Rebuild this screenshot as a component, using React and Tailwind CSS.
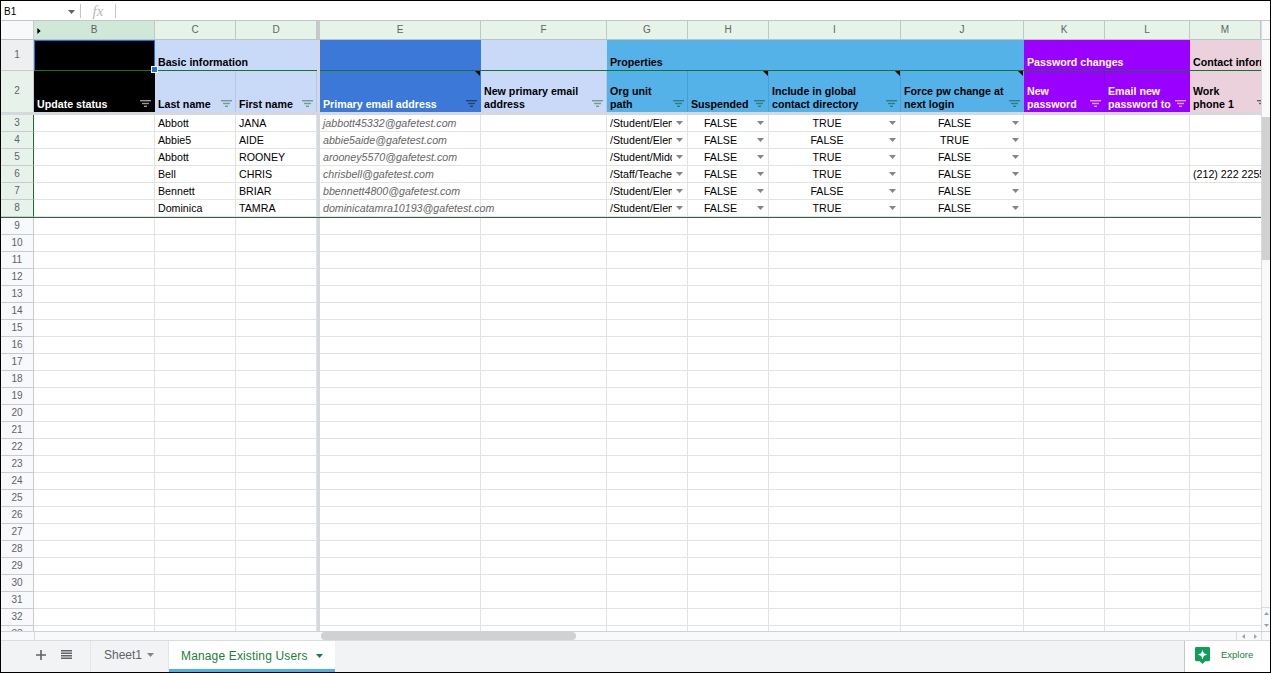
import React from 'react';

const COLS = 'grid grid-cols-[33px_121px_81px_81px_3px_161px_126px_81px_81px_132px_123px_81px_85px_71px]';

const LETTERS = ['B', 'C', 'D', null, 'E', 'F', 'G', 'H', 'I', 'J', 'K', 'L', 'M'];

const USERS = [
  ['Abbott', 'JANA', 'jabbott45332@gafetest.com', '/Student/Elementary', 'FALSE', 'TRUE', 'FALSE', ''],
  ['Abbie5', 'AIDE', 'abbie5aide@gafetest.com', '/Student/Elementary', 'FALSE', 'FALSE', 'TRUE', ''],
  ['Abbott', 'ROONEY', 'arooney5570@gafetest.com', '/Student/Middle', 'FALSE', 'TRUE', 'FALSE', ''],
  ['Bell', 'CHRIS', 'chrisbell@gafetest.com', '/Staff/Teachers', 'FALSE', 'TRUE', 'FALSE', '(212) 222 2255'],
  ['Bennett', 'BRIAR', 'bbennett4800@gafetest.com', '/Student/Elementary', 'FALSE', 'FALSE', 'FALSE', ''],
  ['Dominica', 'TAMRA', 'dominicatamra10193@gafetest.com', '/Student/Elementary', 'FALSE', 'TRUE', 'FALSE', ''],
];

const EMPTY_ROWS = Array.from({ length: 25 }, (_, i) => i + 9);

const FilterIcon = ({ color = '#5f6368' }) => (
  <svg viewBox="0 0 11 7" width="11" height="7" className="absolute right-[3px] bottom-[5px]">
    <rect x="0" y="0" width="11" height="1.4" fill={color} />
    <rect x="2" y="2.8" width="7" height="1.4" fill={color} />
    <rect x="4" y="5.6" width="3" height="1.4" fill={color} />
  </svg>
);

const Caret = ({ color = '#80868b', w = 7, h = 4, className = '' }) => (
  <svg viewBox="0 0 7 4" width={w} height={h} className={className}>
    <path d="M0 0h7L3.5 4z" fill={color} />
  </svg>
);

const NoteMark = () => (
  <span className="absolute top-0 right-0 w-0 h-0 border-t-[5px] border-l-[5px] border-t-black border-l-transparent" />
);

const TopCell = ({ bg, span = '', text = 'text-black', children }) => (
  <div className={`${bg} ${span} ${text} border-b border-b-[#137333] flex items-end px-[3px] pb-[1px] font-bold leading-[14px] whitespace-nowrap overflow-hidden`}>
    {children}
  </div>
);

const HeadCell = ({ bg, text = 'text-black', line = 'border-r-[#b9c7e4]', filter, note, children }) => (
  <div className={`${bg} ${text} ${line} relative border-r flex items-end pl-[3px] pr-[16px] pb-[1px] font-bold leading-[13px] overflow-hidden`}>
    {note && <NoteMark />}
    <span>{children}</span>
    <FilterIcon color={filter} />
  </div>
);

const Cell = ({ className = '', children }) => (
  <div className={`border-r border-b border-[#e2e3e3] h-[17px] leading-[16px] px-[3px] whitespace-nowrap text-black ${className}`}>
    {children}
  </div>
);

const DropCell = ({ left, children }) => (
  <div className="border-r border-b border-[#e2e3e3] h-[17px] leading-[16px] flex items-center text-black">
    <span className={`flex-1 min-w-0 overflow-hidden whitespace-nowrap ${left ? 'pl-[3px] mr-[4px]' : 'text-center pr-[4px]'}`}>{children}</span>
    <Caret className="shrink-0 mr-[4px]" />
  </div>
);

const RowHead = ({ active, children }) => (
  <div className={`${active ? 'bg-[#e7f3ea] border-r-[#137333]' : 'bg-[#f8f9fa] border-r-[#c9cbce]'} border-r border-b border-b-[#c9cbce] h-[17px] leading-[16px] text-center text-[10px] text-[#5f6368]`}>
    {children}
  </div>
);

const Gap = () => <div className="bg-[#d5d8dd]" />;

function ColumnHeaders() {
  return (
    <div className={`${COLS} h-[19px] border-b border-[#bfc2c5]`}>
      <div className="bg-[#f8f9fa] border-r border-[#c9cbce]" />
      {LETTERS.map((l, i) =>
        l === null ? (
          <div key={i} className="bg-[#c7c9cc]" />
        ) : (
          <div
            key={l}
            className={`${l === 'B' ? 'bg-[#cfe8d8]' : 'bg-[#e6f3e9]'} relative border-r border-[#c2c6c4] text-center text-[10px] leading-[18px] text-[#5f6368]`}
          >
            {l === 'B' && <Caret color="#000000" w={4} h={6} className="absolute left-[3px] top-[7px] -rotate-90 scale-150" />}
            {l}
          </div>
        )
      )}
    </div>
  );
}

function HeaderRows() {
  return (
    <>
      <div className={`${COLS} h-[31px]`}>
        <div className="bg-[#eeeff1] border-r border-b border-[#c9cbce] text-center text-[10px] leading-[30px] text-[#5f6368]">1</div>
        <div className="bg-black relative border border-[#1a73e8] border-b-[#137333]">
          <span className="absolute right-[-4px] bottom-[-3px] w-[7px] h-[7px] bg-[#1a73e8] border border-white z-10" />
        </div>
        <TopCell bg="bg-[#c9daf8]" span="col-span-2">Basic information</TopCell>
        <Gap />
        <TopCell bg="bg-[#3c78d8]" />
        <TopCell bg="bg-[#c9daf8]" />
        <TopCell bg="bg-[#54b2e8]" span="col-span-4">Properties</TopCell>
        <TopCell bg="bg-[#9900ff]" span="col-span-2" text="text-white">Password changes</TopCell>
        <TopCell bg="bg-[#ead1dc]">Contact information</TopCell>
      </div>
      <div className={`${COLS} h-[41px]`}>
        <div className="bg-[#e7f3ea] border-r border-[#c9cbce] text-center text-[10px] leading-[40px] text-[#5f6368]">2</div>
        <HeadCell bg="bg-black" text="text-white" line="border-r-black" filter="#9a9a9a">Update status</HeadCell>
        <HeadCell bg="bg-[#c9daf8]" filter="#6f9c8c">Last name</HeadCell>
        <HeadCell bg="bg-[#c9daf8]" filter="#6f9c8c">First name</HeadCell>
        <Gap />
        <HeadCell bg="bg-[#3c78d8]" text="text-white" line="border-r-[#3c78d8]" filter="#24406e" note>Primary email address</HeadCell>
        <HeadCell bg="bg-[#c9daf8]" filter="#6f9c8c">New primary email address</HeadCell>
        <HeadCell bg="bg-[#54b2e8]" line="border-r-[#4a9fd0]" filter="#2f7d83">Org unit path</HeadCell>
        <HeadCell bg="bg-[#54b2e8]" line="border-r-[#4a9fd0]" filter="#2f7d83" note>Suspended</HeadCell>
        <HeadCell bg="bg-[#54b2e8]" line="border-r-[#4a9fd0]" filter="#2f7d83" note>Include in global contact directory</HeadCell>
        <HeadCell bg="bg-[#54b2e8]" line="border-r-[#54b2e8]" filter="#2f7d83" note>Force pw change at next login</HeadCell>
        <HeadCell bg="bg-[#9900ff]" text="text-white" line="border-r-[#8a00e6]" filter="#d9a6ff">New password</HeadCell>
        <HeadCell bg="bg-[#9900ff]" text="text-white" line="border-r-[#9900ff]" filter="#d9a6ff">Email new password to</HeadCell>
        <div className="bg-[#ead1dc] relative flex items-end pl-[3px] pb-[1px] font-bold leading-[13px] text-black overflow-hidden">
          <span>Work<br />phone 1</span>
          <svg viewBox="0 0 11 7" width="11" height="7" className="absolute right-[-7px] bottom-[5px]">
            <rect width="11" height="1.4" fill="#5f6368" />
            <rect x="2" y="2.8" width="7" height="1.4" fill="#5f6368" />
          </svg>
        </div>
      </div>
      <div className="h-[3px] bg-[#d5d8dd]" />
    </>
  );
}

function UserRow({ row, user, last }) {
  const [lastName, firstName, email, org, suspended, directory, force, phone] = user;
  return (
    <div className={`${COLS} ${last ? 'border-b border-b-[#3b5e49]' : ''}`}>
      <RowHead active>{row}</RowHead>
      <Cell />
      <Cell>{lastName}</Cell>
      <Cell>{firstName}</Cell>
      <Gap />
      <Cell className="italic text-[#666666]! overflow-visible">{email}</Cell>
      <Cell />
      <DropCell left>{org}</DropCell>
      <DropCell>{suspended}</DropCell>
      <DropCell>{directory}</DropCell>
      <DropCell>{force}</DropCell>
      <Cell />
      <Cell />
      <Cell className="overflow-hidden border-r-0">{phone}</Cell>
    </div>
  );
}

function EmptyRow({ row }) {
  return (
    <div className={COLS}>
      <RowHead>{row}</RowHead>
      <Cell />
      <Cell />
      <Cell />
      <Gap />
      {Array.from({ length: 9 }, (_, i) => <Cell key={i} className={i === 8 ? 'border-r-0' : ''} />)}
    </div>
  );
}

function VerticalScrollbar() {
  return (
    <div className="w-[9px] shrink-0 bg-[#f8f9fa] border-l border-[#dadce0] flex flex-col">
      <div className="h-[19px] border-b border-[#bfc2c5] bg-[#f8f9fa]" />
      <div className="h-[77px]" />
      <div className="h-[143px] bg-[#d0d1d3]" />
      <div className="flex-1" />
      <div className="h-[24px] flex flex-col items-center justify-around border-t border-[#dadce0]">
        <Caret color="#9aa0a6" w={5} h={3} className="rotate-180" />
        <Caret color="#9aa0a6" w={5} h={3} />
      </div>
    </div>
  );
}

function HorizontalScrollbar() {
  return (
    <div className="h-[9px] shrink-0 bg-[#f8f9fa] border-t border-[#d0d2d5] flex">
      <div className="w-[34px] border-r border-[#dadce0] shrink-0" />
      <div className="w-[286px] shrink-0" />
      <div className="w-[255px] shrink-0 bg-[#d0d1d3] rounded-l-[4px] rounded-r-[4px]" />
      <div className="flex-1" />
      <div className="w-[25px] border-l border-[#dadce0] flex items-center justify-around">
        <Caret color="#9aa0a6" w={5} h={3} className="rotate-90" />
        <Caret color="#9aa0a6" w={5} h={3} className="-rotate-90" />
      </div>
      <div className="w-[9px] border-l border-[#dadce0]" />
    </div>
  );
}

function TabBar() {
  return (
    <div className="h-[32px] shrink-0 bg-[#f1f3f4] border-t border-[#dadce0] flex text-[12px]">
      <div className="w-[89px] shrink-0 flex items-center pl-[35px] pb-[4px] gap-[15px] text-[#5f6368]">
        <svg viewBox="0 0 10 10" width="10" height="10">
          <path d="M4.2 0h1.6v4.2H10v1.6H5.8V10H4.2V5.8H0V4.2h4.2z" fill="#5f6368" />
        </svg>
        <svg viewBox="0 0 11 9" width="11" height="9">
          <path d="M0 0h11v1.6H0zM0 2.5h11v1.6H0zM0 5h11v1.6H0zM0 7.4h11V9H0z" fill="#5f6368" />
        </svg>
      </div>
      <div className="w-[79px] shrink-0 border-x border-[#e3e5e7] flex items-center pl-[13px] pb-[3px] gap-[5px] text-[#5f6368]">
        <span>Sheet1</span>
        <Caret />
      </div>
      <div className="w-[166px] shrink-0 bg-white border-b-[3px] border-b-[#4db2e8] flex items-center pl-[12px] pt-[1px] gap-[8px] text-[#188038] font-medium">
        <span className="tracking-[0.15px]">Manage Existing Users</span>
        <Caret color="#188038" />
      </div>
      <div className="flex-1" />
      <div className="w-[86px] shrink-0 bg-white border-l border-[#c4c7ca] flex items-center pl-[10px] pb-[3px] gap-[11px] text-[#188038] text-[9.5px]">
        <svg viewBox="0 0 16 18" width="15" height="17">
          <path d="M1.5 0h13A1.5 1.5 0 0 1 16 1.5v12a1.5 1.5 0 0 1-1.5 1.5H11l-3 3-3-3H1.5A1.5 1.5 0 0 1 0 13.500v-12A1.500 1.500 0 0 1 1.500 0z" fill="#0f9d58" />
          <path d="M8 3l1.400 3.600L13 8l-3.600 1.400L8 13l-1.400-3.600L3 8l3.600-1.400z" fill="#ffffff" />
        </svg>
        <span>Explore</span>
      </div>
    </div>
  );
}

export default function App() {
  return (
    <div className="w-[1271px] h-[673px] bg-white border border-black flex flex-col overflow-hidden font-['Liberation_Sans',Arial,sans-serif] text-[10.67px]">
      <div className="h-[20px] shrink-0 border-b border-[#c4c7ca] flex items-center text-black">
        <div className="w-[79px] shrink-0 flex items-center justify-between pl-[3px] pr-[5px] pt-[2px] text-[10px]">
          <span>B1</span>
          <Caret color="#5f6368" />
        </div>
        <div className="h-[14px] w-px bg-[#c4c7ca]" />
        <div className="w-[34px] shrink-0 text-center font-['Liberation_Serif',serif] italic text-[15px] leading-[16px] text-[#b5b8bb]">fx</div>
        <div className="h-[14px] w-px bg-[#c4c7ca]" />
      </div>

      <div className="flex-1 min-h-0 flex">
        <div className="flex-1 min-w-0 overflow-hidden">
          <ColumnHeaders />
          <HeaderRows />
          {USERS.map((u, i) => <UserRow key={i} row={i + 3} user={u} last={i === USERS.length - 1} />)}
          {EMPTY_ROWS.map((r) => <EmptyRow key={r} row={r} />)}
        </div>
        <VerticalScrollbar />
      </div>

      <HorizontalScrollbar />
      <TabBar />
    </div>
  );
}
